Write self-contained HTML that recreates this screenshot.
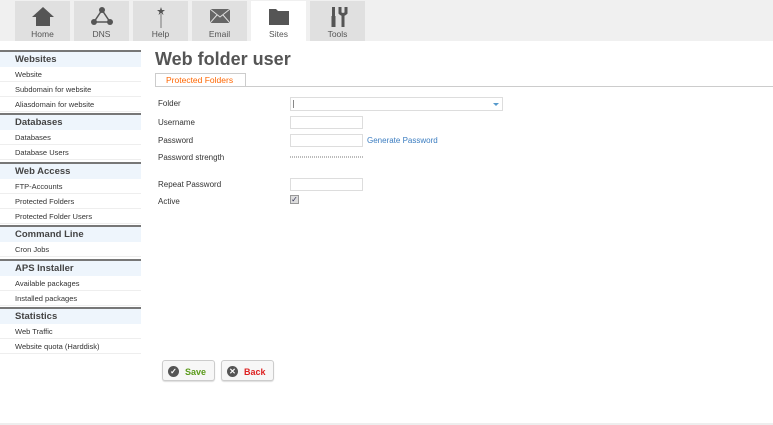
<!DOCTYPE html>
<html><head><style>
*{margin:0;padding:0;box-sizing:border-box}
body{width:773px;height:425px;overflow:hidden;background:#fff;font-family:"Liberation Sans",sans-serif;color:#444;position:relative}
#top{position:absolute;left:0;top:0;width:773px;height:41px;background:#f0f0f0}
.tab{position:absolute;top:1px;width:55px;height:40px;background:#e0e0e0;text-align:center;font-size:8.5px;color:#555}
.tab.act{background:#fff}
.tab svg{position:absolute;left:17px;top:5px}
.tab span{position:absolute;left:0;right:0;top:28px}
#side{position:absolute;left:0;top:50px;width:141px}
.h{height:17px;background:#eef5fc;border-top:2px solid #777;font-size:9.5px;font-weight:bold;color:#444;padding:2px 0 0 15px;margin-top:1px}
.h:first-child{margin-top:0}
.i{height:15px;border-bottom:1px solid #eee;font-size:7.5px;padding:3px 0 0 15px;color:#333}
.sp{height:1px}
.abs{position:absolute}
.lbl{position:absolute;left:158px;font-size:8px;color:#333}
.inp{position:absolute;left:290px;width:73px;height:13px;border:1px solid #ddd;background:#fff}
.btn{position:absolute;top:360px;width:53px;height:21px;border:1px solid #ccc;border-radius:3px;background:#f7f7f7;font-size:9px;font-weight:bold;box-shadow:0 1px 1px #ddd}
.btn i{position:absolute;left:5px;top:5px;width:11px;height:11px;border-radius:50%;background:#555;color:#fff;font-style:normal;font-size:8px;line-height:11px;text-align:center}
.btn span{position:absolute;left:22px;top:6px}
</style></head><body>
<div id="top">
<div class="tab" style="left:15px"><svg width="22" height="20"><path d="M11 1 L22 11 L18 11 L18 20 L4 20 L4 11 L0 11Z" fill="#555"/></svg><span>Home</span></div>
<div class="tab" style="left:74px"><svg width="22" height="20"><path d="M11 4 L3 16 L19 16Z" fill="none" stroke="#555" stroke-width="1.5"/><circle cx="11" cy="4" r="3" fill="#555"/><circle cx="3" cy="16" r="3" fill="#555"/><circle cx="19" cy="16" r="3" fill="#555"/></svg><span>DNS</span></div>
<div class="tab" style="left:133px"><svg width="22" height="22"><path d="M11 1 L12 4 L15 4 L12.5 6 L13.5 9 L11 7 L8.5 9 L9.5 6 L7 4 L10 4Z" fill="#555"/><path d="M11 8 V22" stroke="#777" stroke-width="1"/></svg><span>Help</span></div>
<div class="tab" style="left:192px"><svg width="22" height="20"><rect x="1" y="3" width="20" height="14" fill="#666"/><path d="M1 3 L11 11 L21 3 M1 17 L8 9 M21 17 L14 9" stroke="#ddd" stroke-width="1" fill="none"/></svg><span>Email</span></div>
<div class="tab act" style="left:251px"><svg width="22" height="20"><path d="M1 3 H8 L10 5 H21 V19 H1Z" fill="#555"/></svg><span>Sites</span></div>
<div class="tab" style="left:310px"><svg width="22" height="22"><rect x="5" y="1" width="3" height="9" fill="#555"/><rect x="4.5" y="10" width="4" height="11" fill="#555"/><path d="M13 1 V7 Q16 10 19 7 V1 M16 8 V21" stroke="#555" stroke-width="3" fill="none"/></svg><span>Tools</span></div>
</div>
<div id="side">
<div class="h">Websites</div><div class="i">Website</div><div class="i">Subdomain for website</div><div class="i">Aliasdomain for website</div>
<div class="h">Databases</div><div class="i">Databases</div><div class="i">Database Users</div><div class="sp"></div>
<div class="h">Web Access</div><div class="i">FTP-Accounts</div><div class="i">Protected Folders</div><div class="i">Protected Folder Users</div>
<div class="h">Command Line</div><div class="i">Cron Jobs</div><div class="sp"></div>
<div class="h">APS Installer</div><div class="i">Available packages</div><div class="i">Installed packages</div>
<div class="h">Statistics</div><div class="i">Web Traffic</div><div class="i">Website quota (Harddisk)</div>
</div>
<div class="abs" style="left:155px;top:49px;font-size:18px;font-weight:bold;color:#555">Web folder user</div>
<div class="abs" style="left:155px;top:73px;width:91px;height:14px;border:1px solid #ccc;border-bottom:none;font-size:8.5px;color:#f60;padding:1px 0 0 10px">Protected Folders</div>
<div class="abs" style="left:155px;top:86px;width:618px;height:1px;background:#ccc"></div>
<div class="lbl" style="top:99px">Folder</div>
<div class="abs" style="left:290px;top:97px;width:213px;height:14px;border:1px solid #ddd"><div class="abs" style="left:2px;top:2px;width:1px;height:8px;background:#888"></div><div class="abs" style="right:3px;top:5px;border:3px solid transparent;border-top-color:#59c"></div></div>
<div class="lbl" style="top:118px">Username</div><div class="inp" style="top:116px"></div>
<div class="lbl" style="top:136px">Password</div><div class="inp" style="top:134px"></div>
<div class="abs" style="left:367px;top:136px;font-size:8px;color:#3a7cc0">Generate Password</div>
<div class="lbl" style="top:153px">Password strength</div>
<div class="abs" style="left:290px;top:156px;width:73px;height:2px;border-top:1px dotted #bbb;border-bottom:1px dotted #bbb"></div>
<div class="lbl" style="top:180px">Repeat Password</div><div class="inp" style="top:178px"></div>
<div class="lbl" style="top:197px">Active</div>
<div class="abs" style="left:290px;top:195px;width:9px;height:9px;border:1px solid #999;background:#ddd;font-size:8px;line-height:8px;text-align:center;color:#335">✓</div>
<div class="btn" style="left:162px"><i>✓</i><span style="color:#5a9a1a">Save</span></div>
<div class="btn" style="left:221px"><i>✕</i><span style="color:#d22">Back</span></div>
<div class="abs" style="left:0;top:423px;width:773px;height:2px;background:#eee"></div>
</body></html>
